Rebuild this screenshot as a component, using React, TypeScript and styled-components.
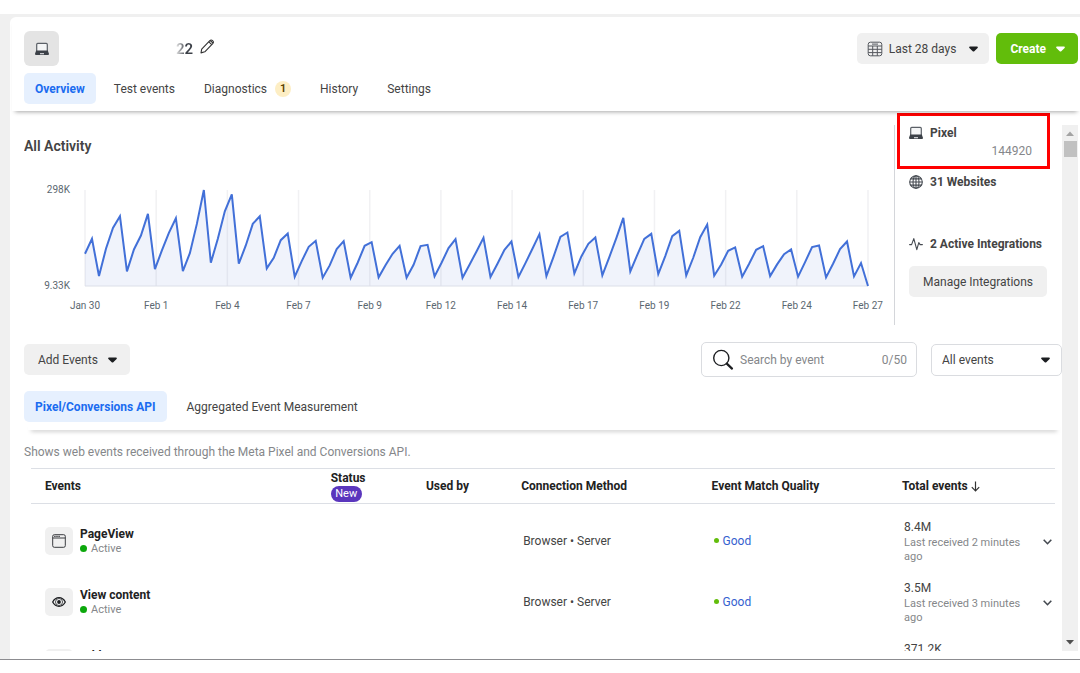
import React from "react";
import styled, { createGlobalStyle, css } from "styled-components";

const Global = createGlobalStyle`
  *, *::before, *::after { box-sizing: border-box; }
  body {
    margin: 0;
    background: #fff;
    color: #444;
    font: 400 12px/16px Roboto, "Liberation Sans", sans-serif;
  }
  button, input, select { font: inherit; color: inherit; margin: 0; }
  h1, h2, p { margin: 0; }
  svg { display: block; flex: none; }
`;

const Page = styled.div`
  height: 100vh;
  padding: 14px 0 13px;
  display: flex;
  flex-direction: column;
`;

const Frame = styled.div`
  flex: 1;
  min-height: 0;
  padding: 3px 0 0 10px;
  background: #f0f0f0;
  border-bottom: 1px solid #8c8c90;
  display: flex;
`;

const Card = styled.main`
  flex: 1;
  min-width: 0;
  padding-bottom: 8px;
  background: #fff;
  border-radius: 6px 0 0 0;
  display: flex;
  flex-direction: column;
`;

const Header = styled.header`
  position: relative;
  z-index: 1;
  margin-left: 2px;
  padding: 14px 2px 7px 12px;
  border-radius: 6px 0 0 0;
  background: #fff;
  box-shadow: 0 4px 4px -3px rgba(0, 0, 0, 0.35);
`;

const TitleRow = styled.div`
  display: flex;
  align-items: center;
  height: 35px;
`;

const SourceIcon = styled.span`
  width: 35px;
  height: 35px;
  border-radius: 6px;
  background: #e4e4e4;
  display: grid;
  place-items: center;
`;

const Title = styled.h1`
  flex: 1;
  padding-left: 117px;
  display: flex;
  align-items: center;
  gap: 7px;
  font-size: 15px;
  font-weight: 600;
`;

const FadedName = styled.span`
  background: linear-gradient(90deg, #e8e8e8, #3c4048 60%);
  background-clip: text;
  color: transparent;
`;

const IconButton = styled.button`
  padding: 0;
  border: 0;
  background: none;
  cursor: pointer;
`;

const EditButton = styled(IconButton)`
  margin-bottom: 4px;
`;

const Actions = styled.div`
  display: flex;
  gap: 7px;
`;

const Button = styled.button<{ $primary?: boolean }>`
  height: 31px;
  padding: 0 13px 0 14px;
  border: 0;
  border-radius: 5px;
  background: #f0f0f0;
  display: flex;
  align-items: center;
  justify-content: center;
  gap: 10px;
  white-space: nowrap;
  cursor: pointer;
  ${(p) =>
    p.$primary &&
    css`
      background: #62bd0b;
      color: #fff;
      font-weight: 700;
    `}
`;

const DateButton = styled(Button)`
  padding: 0 11px 0 10px;
  gap: 6px;
  & > svg:last-child { margin-left: 7px; }
`;

const Tabs = styled.nav<{ $spaced?: boolean }>`
  display: flex;
  gap: ${(p) => (p.$spaced ? 9 : 7)}px;
  margin-top: ${(p) => (p.$spaced ? 14 : 7)}px;
`;

const Tab = styled.a<{ $active?: boolean }>`
  height: 31px;
  padding: 0 11px;
  border-radius: 5px;
  display: flex;
  align-items: center;
  gap: 8px;
  color: #444;
  text-decoration: none;
  ${(p) =>
    p.$active &&
    css`
      background: #e6f0fe;
      color: #1a6cf0;
      font-weight: 700;
    `}
`;

const Badge = styled.span`
  width: 16px;
  height: 16px;
  border-radius: 8px;
  background: #fdeec4;
  color: #5a4100;
  font-size: 11px;
  font-weight: 600;
  text-align: center;
`;

const Body = styled.div`
  flex: 1;
  min-height: 0;
  padding: 0 2px 0 14px;
  display: flex;
`;

const Content = styled.div`
  flex: 1;
  min-width: 0;
  overflow: hidden;
  padding-top: 14px;
`;

const Scrollbar = styled.div`
  width: 16px;
  margin-top: 14px;
  padding: 6px 0;
  background: #f0f0f0;
  display: flex;
  flex-direction: column;
  align-items: center;
`;

const Thumb = styled.div`
  width: 13px;
  height: 16px;
  margin: 5px 0 auto;
  background: #c1c1c1;
`;

const Summary = styled.section`
  display: flex;
  min-height: 200px;
`;

const Activity = styled.div`
  flex: 1;
  min-width: 0;
  padding: 13px 26px 0 0;
`;

const SectionTitle = styled.h2`
  font-size: 14px;
  line-height: 16px;
  font-weight: 600;
`;

const Chart = styled.div`
  margin-top: 36px;
  display: grid;
  grid-template-columns: 46px 1fr;
  column-gap: 15px;
  row-gap: 14px;
  color: #5b6770;
  font-size: 10px;
  line-height: 12px;
`;

const YAxis = styled.div`
  margin: -6px 0;
  display: flex;
  flex-direction: column;
  justify-content: space-between;
  text-align: right;
`;

const Plot = styled.svg`
  width: 100%;
  height: 96px;
  overflow: visible;
`;

const XAxis = styled.div`
  grid-column: 2;
  display: flex;
  justify-content: space-between;
`;

const XLabel = styled.span`
  width: 0;
  display: flex;
  justify-content: center;
  white-space: nowrap;
`;

const Side = styled.aside`
  position: relative;
  width: 168px;
  padding-left: 14px;
  border-left: 1px solid #d4d6da;
  display: flex;
  flex-direction: column;
  align-items: flex-start;
`;

const Fact = styled.div<{ $gap?: number }>`
  margin-top: ${(p) => p.$gap ?? 0}px;
  display: flex;
  align-items: center;
  gap: 7px;
  font-weight: 700;
  white-space: nowrap;
`;

const PixelId = styled.div`
  align-self: flex-end;
  margin: 2px 30px 0 0;
  color: #85878a;
`;

const Highlight = styled.div`
  position: absolute;
  inset: -12px 12px auto 2px;
  height: 56px;
  border: 3px solid #ff0000;
`;

const ManageButton = styled(Button)`
  margin-top: 14px;
  padding: 0 14px;
`;

const Toolbar = styled.section`
  margin-top: 17px;
  display: flex;
  align-items: center;
`;

const SearchBox = styled.label`
  width: 216px;
  height: 35px;
  margin: 0 14px 0 auto;
  padding: 0 9px 0 10px;
  border: 1px solid #dadce0;
  border-radius: 5px;
  display: flex;
  align-items: center;
  gap: 6px;
`;

const SearchInput = styled.input`
  flex: 1;
  min-width: 0;
  padding: 0;
  border: 0;
  outline: 0;
  background: none;
  &::placeholder { color: #85878a; opacity: 1; }
`;

const Counter = styled.span`
  color: #85878a;
`;

const SelectBox = styled.div`
  position: relative;
  width: 131px;
`;

const Select = styled.select`
  display: block;
  width: 100%;
  height: 32px;
  padding: 0 10px;
  border: 1px solid #dadce0;
  border-radius: 5px;
  background: #fff;
  appearance: none;
`;

const SelectCaret = styled.span`
  position: absolute;
  right: 12px;
  top: 13px;
  pointer-events: none;
`;

const Divider = styled.div`
  height: 8px;
  margin: 0 2px 0 4px;
  box-shadow: 0 4px 4px -3px rgba(0, 0, 0, 0.35);
`;

const Note = styled.p`
  margin: 14px 0 8px;
  color: #85878a;
`;

const Table = styled.table`
  width: calc(100% - 14px);
  margin-left: 7px;
  table-layout: fixed;
  border-collapse: separate;
  border-spacing: 0;
`;

const Th = styled.th<{ $w: string }>`
  width: ${(p) => p.$w};
  height: 36px;
  padding: 0 0 0 14px;
  border: solid #dcdfe5;
  border-width: 1px 0;
  color: #222;
  font-weight: 700;
  text-align: left;
  white-space: nowrap;
`;

const HeadLabel = styled.span`
  display: flex;
  align-items: center;
  gap: 3px;
`;

const NewPill = styled.span`
  display: block;
  width: 31px;
  height: 16px;
  border-radius: 8px;
  background: #5a36bd;
  color: #fff;
  font-size: 11px;
  font-weight: 400;
  text-align: center;
`;

const Td = styled.td<{ $indent?: number }>`
  height: 61px;
  padding: 12px 0 0 ${(p) => p.$indent ?? 16}px;
  vertical-align: middle;
`;

const EventCell = styled.div`
  display: flex;
  align-items: center;
  gap: 7px;
`;

const EventIcon = styled.span`
  width: 28px;
  height: 28px;
  border-radius: 5px;
  background: #f0f0f0;
  display: grid;
  place-items: center;
`;

const EventName = styled.div`
  color: #222;
  font-weight: 700;
`;

const Small = styled.div`
  display: flex;
  align-items: center;
  gap: 4px;
  color: #85878a;
  font-size: 11px;
  line-height: 14px;
`;

const Dot = styled.span<{ $size: number; $color: string }>`
  width: ${(p) => p.$size}px;
  height: ${(p) => p.$size}px;
  border-radius: 50%;
  background: ${(p) => p.$color};
`;

const Quality = styled.a`
  display: flex;
  align-items: center;
  gap: 4px;
  color: #365fcf;
  text-decoration: none;
`;

const Total = styled.div`
  line-height: 18px;
`;

const Caret = ({ color = "#1c1e21" }: { color?: string }) => (
  <svg width="9" height="6" viewBox="0 0 9 6" fill={color}>
    <path d="M1 .5h7c.8 0 1.2.8.6 1.4L5.3 5.2a1.1 1.1 0 0 1-1.6 0L.4 1.9C-.2 1.3.2.5 1 .5z" />
  </svg>
);

const Laptop = () => (
  <svg width="14" height="14" viewBox="0 0 14 14">
    <path d="M1.700 9V2.400c0-.6.4-1 1-1h8.600c.6 0 1 .4 1 1V9" fill="#f4f5f6" stroke="#5b6067" strokeWidth="1.200" />
    <path d="M1.200 8.600h11.600l1.100 3c.2.7-.1 1.300-.8 1.300H.9c-.7 0-1-.6-.8-1.300z" fill="#3c4148" />
    <path d="M5 11.700h4" stroke="#d8dadd" strokeWidth="1.200" />
  </svg>
);

const Pencil = () => (
  <svg width="15" height="15" viewBox="0 0 15 15" fill="none" stroke="#333" strokeWidth="1.1" strokeLinejoin="round">
    <path d="M1 13.9l.7-3.8 7.9-8.3c.9-.9 2.1-1 3-.2s.9 2.1.1 3L4.8 12.8z" />
    <path d="M8.8 2.8l3 2.9M10.2 1.5l2.9 2.7" />
  </svg>
);

const Calendar = () => (
  <svg width="16" height="16" viewBox="0 0 16 16" fill="none" stroke="#55585e" strokeWidth="1">
    <rect x="1.2" y="1.2" width="13.6" height="13.6" rx="2.2" />
    <path d="M1.2 5h13.6M1.2 8.3h13.6M1.2 11.6h13.6M5.7 5v9.8M10.3 5v9.8M5 3.1h6" />
  </svg>
);

const Globe = () => (
  <svg width="14" height="14" viewBox="0 0 14 14" fill="none" stroke="#444950" strokeWidth="1.1">
    <circle cx="7" cy="7" r="6.3" />
    <ellipse cx="7" cy="7" rx="3" ry="6.3" />
    <path d="M7 .7v12.6M.7 7h12.6M1.6 3.9h10.8M1.6 10.1h10.8" />
  </svg>
);

const Pulse = () => (
  <svg width="14" height="14" viewBox="0 0 14 14" fill="none" stroke="#444950" strokeWidth="1.1" strokeLinejoin="round" strokeLinecap="round">
    <path d="M.6 7.6h2L4.8 1.6l3 11 2-7 1.3 2h2.3" />
  </svg>
);

const Magnifier = () => (
  <svg width="22" height="22" viewBox="0 0 22 22" fill="none" stroke="#1c1e21">
    <circle cx="9.3" cy="9" r="7.6" strokeWidth="1.4" />
    <path d="M14.8 14.6l5.2 5" strokeWidth="2.2" strokeLinecap="round" />
  </svg>
);

const Browser = () => (
  <svg width="14" height="14" viewBox="0 0 14 14" fill="none" stroke="#3a3c40" strokeWidth="1">
    <rect x=".7" y=".7" width="12.6" height="12.6" rx="1.6" />
    <path d="M.7 4h12.6" />
    <path d="M2.2 2.4h6" strokeWidth="1.3" strokeDasharray="1.4 .7" />
  </svg>
);

const Eye = () => (
  <svg width="14" height="12" viewBox="0 0 14 12" fill="none" stroke="#1c1e21">
    <path d="M.7 6C2.200 3.200 4.300 1.700 7 1.700S11.800 3.200 13.300 6C11.800 8.800 9.700 10.300 7 10.300S2.200 8.800.7 6z" strokeWidth="1.300" />
    <circle cx="7" cy="6" r="3.500" strokeWidth=".8" fill="#fff" />
    <circle cx="7" cy="6" r="1.900" fill="#1c1e21" stroke="none" />
  </svg>
);

const Cart = () => (
  <svg width="14" height="14" viewBox="0 0 14 14" fill="none" stroke="#3a3c40">
    <path d="M1 2h2l2 7h6l2-5H4" />
    <circle cx="5.500" cy="11.500" r="1" />
    <circle cx="10.500" cy="11.500" r="1" />
  </svg>
);

const ArrowDown = () => (
  <svg width="9" height="11" viewBox="0 0 9 11" fill="none" stroke="#333" strokeWidth="1.2">
    <path d="M4.500.5v9.300M.8 6.200l3.700 3.700 3.700-3.700" />
  </svg>
);

const Chevron = () => (
  <svg width="9" height="6" viewBox="0 0 9 6" fill="none" stroke="#444950" strokeWidth="1.600">
    <path d="M.7.8l3.800 3.900L8.300.8" />
  </svg>
);

const ScrollArrow = ({ up }: { up?: boolean }) => (
  <svg width="8" height="5" viewBox="0 0 8 5" fill={up ? "#a3a3a3" : "#505050"}>
    <path d={up ? "M0 5l4-4.500L8 5z" : "M0 0l4 4.500L8 0z"} />
  </svg>
);

/* Depth below the top of the plot for each of the 113 samples; 289 is the baseline. */
const samples = [
  192, 147, 259, 177, 114, 79, 245, 179, 137, 72, 238, 182, 129, 85, 244, 190, 102, 0, 219, 147,
  64, 13, 222, 167, 102, 79, 236, 204, 151, 131, 261, 214, 171, 153, 264, 227, 178, 154, 264, 219,
  168, 157, 263, 226, 192, 168, 264, 225, 169, 165, 260, 219, 175, 148, 264, 225, 185, 144, 262, 222,
  180, 155, 262, 220, 177, 133, 259, 202, 141, 128, 251, 200, 162, 143, 257, 202, 145, 84, 245, 195,
  147, 132, 253, 199, 139, 123, 257, 204, 142, 104, 258, 224, 183, 173, 261, 222, 180, 169, 259, 224,
  193, 179, 261, 217, 172, 167, 263, 222, 178, 155, 260, 220, 289,
];

const dates = ["Jan 30", "Feb 1", "Feb 4", "Feb 7", "Feb 9", "Feb 12", "Feb 14", "Feb 17", "Feb 19", "Feb 22", "Feb 24", "Feb 27"];

const events = [
  { name: "PageView", icon: <Browser />, total: "8.4M", ago: 2 },
  { name: "View content", icon: <Eye />, total: "3.5M", ago: 3 },
  { name: "Add to cart", icon: <Cart />, total: "371.2K", ago: 3 },
];

function ActivityChart() {
  const last = samples.length - 1;
  const line = samples.map((y, x) => `${x},${y}`).join(" ");
  return (
    <Chart>
      <YAxis>
        <span>298K</span>
        <span>9.33K</span>
      </YAxis>
      <Plot viewBox={`0 0 ${last} 289`} preserveAspectRatio="none" role="img" aria-label="All Activity">
        {dates.map((d, i) => {
          const x = (i * last) / (dates.length - 1);
          return <line key={d} x1={x} x2={x} y1="0" y2="289" stroke="#f1f1f3" strokeWidth="1.500" vectorEffect="non-scaling-stroke" />;
        })}
        <polygon points={`0,289 ${line}`} fill="#3c62d0" fillOpacity="0.08" />
        <line x1="0" x2={last} y1="289" y2="289" stroke="#dcdfe8" vectorEffect="non-scaling-stroke" />
        <polyline points={line} fill="none" stroke="#4270d8" strokeWidth="2" vectorEffect="non-scaling-stroke" />
      </Plot>
      <XAxis>
        {dates.map((d) => (
          <XLabel key={d}>{d}</XLabel>
        ))}
      </XAxis>
    </Chart>
  );
}

function EventsTable() {
  return (
    <Table>
      <thead>
        <tr>
          <Th $w="27.9%">Events</Th>
          <Th $w="9.3%">
            Status
            <NewPill>New</NewPill>
          </Th>
          <Th $w="9.3%">Used by</Th>
          <Th $w="18.6%">Connection Method</Th>
          <Th $w="18.6%">Event Match Quality</Th>
          <Th $w="13.7%">
            <HeadLabel>
              Total events <ArrowDown />
            </HeadLabel>
          </Th>
          <Th $w="2.6%" />
        </tr>
      </thead>
      <tbody>
        {events.map((e) => (
          <tr key={e.name}>
            <Td $indent={14}>
              <EventCell>
                <EventIcon>{e.icon}</EventIcon>
                <div>
                  <EventName>{e.name}</EventName>
                  <Small>
                    <Dot $size={7} $color="#0ca80c" />
                    Active
                  </Small>
                </div>
              </EventCell>
            </Td>
            <Td />
            <Td />
            <Td>Browser • Server</Td>
            <Td>
              <Quality href="#quality">
                <Dot $size={5} $color="#62bd0b" />
                Good
              </Quality>
            </Td>
            <Td>
              <Total>{e.total}</Total>
              <Small>{`Last received ${e.ago} minutes ago`}</Small>
            </Td>
            <Td $indent={15}>
              <IconButton aria-label={`Expand ${e.name}`}>
                <Chevron />
              </IconButton>
            </Td>
          </tr>
        ))}
      </tbody>
    </Table>
  );
}

export default function App() {
  return (
    <>
      <Global />
      <Page>
        <Frame>
          <Card>
            <Header>
              <TitleRow>
                <SourceIcon>
                  <Laptop />
                </SourceIcon>
                <Title>
                  <FadedName>22</FadedName>
                  <EditButton aria-label="Edit name">
                    <Pencil />
                  </EditButton>
                </Title>
                <Actions>
                  <DateButton>
                    <Calendar />
                    Last 28 days
                    <Caret />
                  </DateButton>
                  <Button $primary>
                    Create
                    <Caret color="#fff" />
                  </Button>
                </Actions>
              </TitleRow>
              <Tabs>
                <Tab href="#overview" $active>Overview</Tab>
                <Tab href="#test">Test events</Tab>
                <Tab href="#diagnostics">
                  Diagnostics <Badge>1</Badge>
                </Tab>
                <Tab href="#history">History</Tab>
                <Tab href="#settings">Settings</Tab>
              </Tabs>
            </Header>
            <Body>
              <Content>
                <Summary>
                  <Activity>
                    <SectionTitle>All Activity</SectionTitle>
                    <ActivityChart />
                  </Activity>
                  <Side>
                    <Fact>
                      <Laptop />
                      Pixel
                    </Fact>
                    <PixelId>144920</PixelId>
                    <Fact $gap={15}>
                      <Globe />
                      31 Websites
                    </Fact>
                    <Fact $gap={46}>
                      <Pulse />2 Active Integrations
                    </Fact>
                    <ManageButton>Manage Integrations</ManageButton>
                    <Highlight />
                  </Side>
                </Summary>
                <Toolbar>
                  <Button>
                    Add Events
                    <Caret />
                  </Button>
                  <SearchBox>
                    <Magnifier />
                    <SearchInput placeholder="Search by event" aria-label="Search by event" />
                    <Counter>0/50</Counter>
                  </SearchBox>
                  <SelectBox>
                    <Select aria-label="Filter events">
                      <option>All events</option>
                    </Select>
                    <SelectCaret>
                      <Caret />
                    </SelectCaret>
                  </SelectBox>
                </Toolbar>
                <Tabs $spaced>
                  <Tab href="#pixel" $active>Pixel/Conversions API</Tab>
                  <Tab href="#aggregated">Aggregated Event Measurement</Tab>
                </Tabs>
                <Divider />
                <Note>Shows web events received through the Meta Pixel and Conversions API.</Note>
                <EventsTable />
              </Content>
              <Scrollbar>
                <ScrollArrow up />
                <Thumb />
                <ScrollArrow />
              </Scrollbar>
            </Body>
          </Card>
        </Frame>
      </Page>
    </>
  );
}
